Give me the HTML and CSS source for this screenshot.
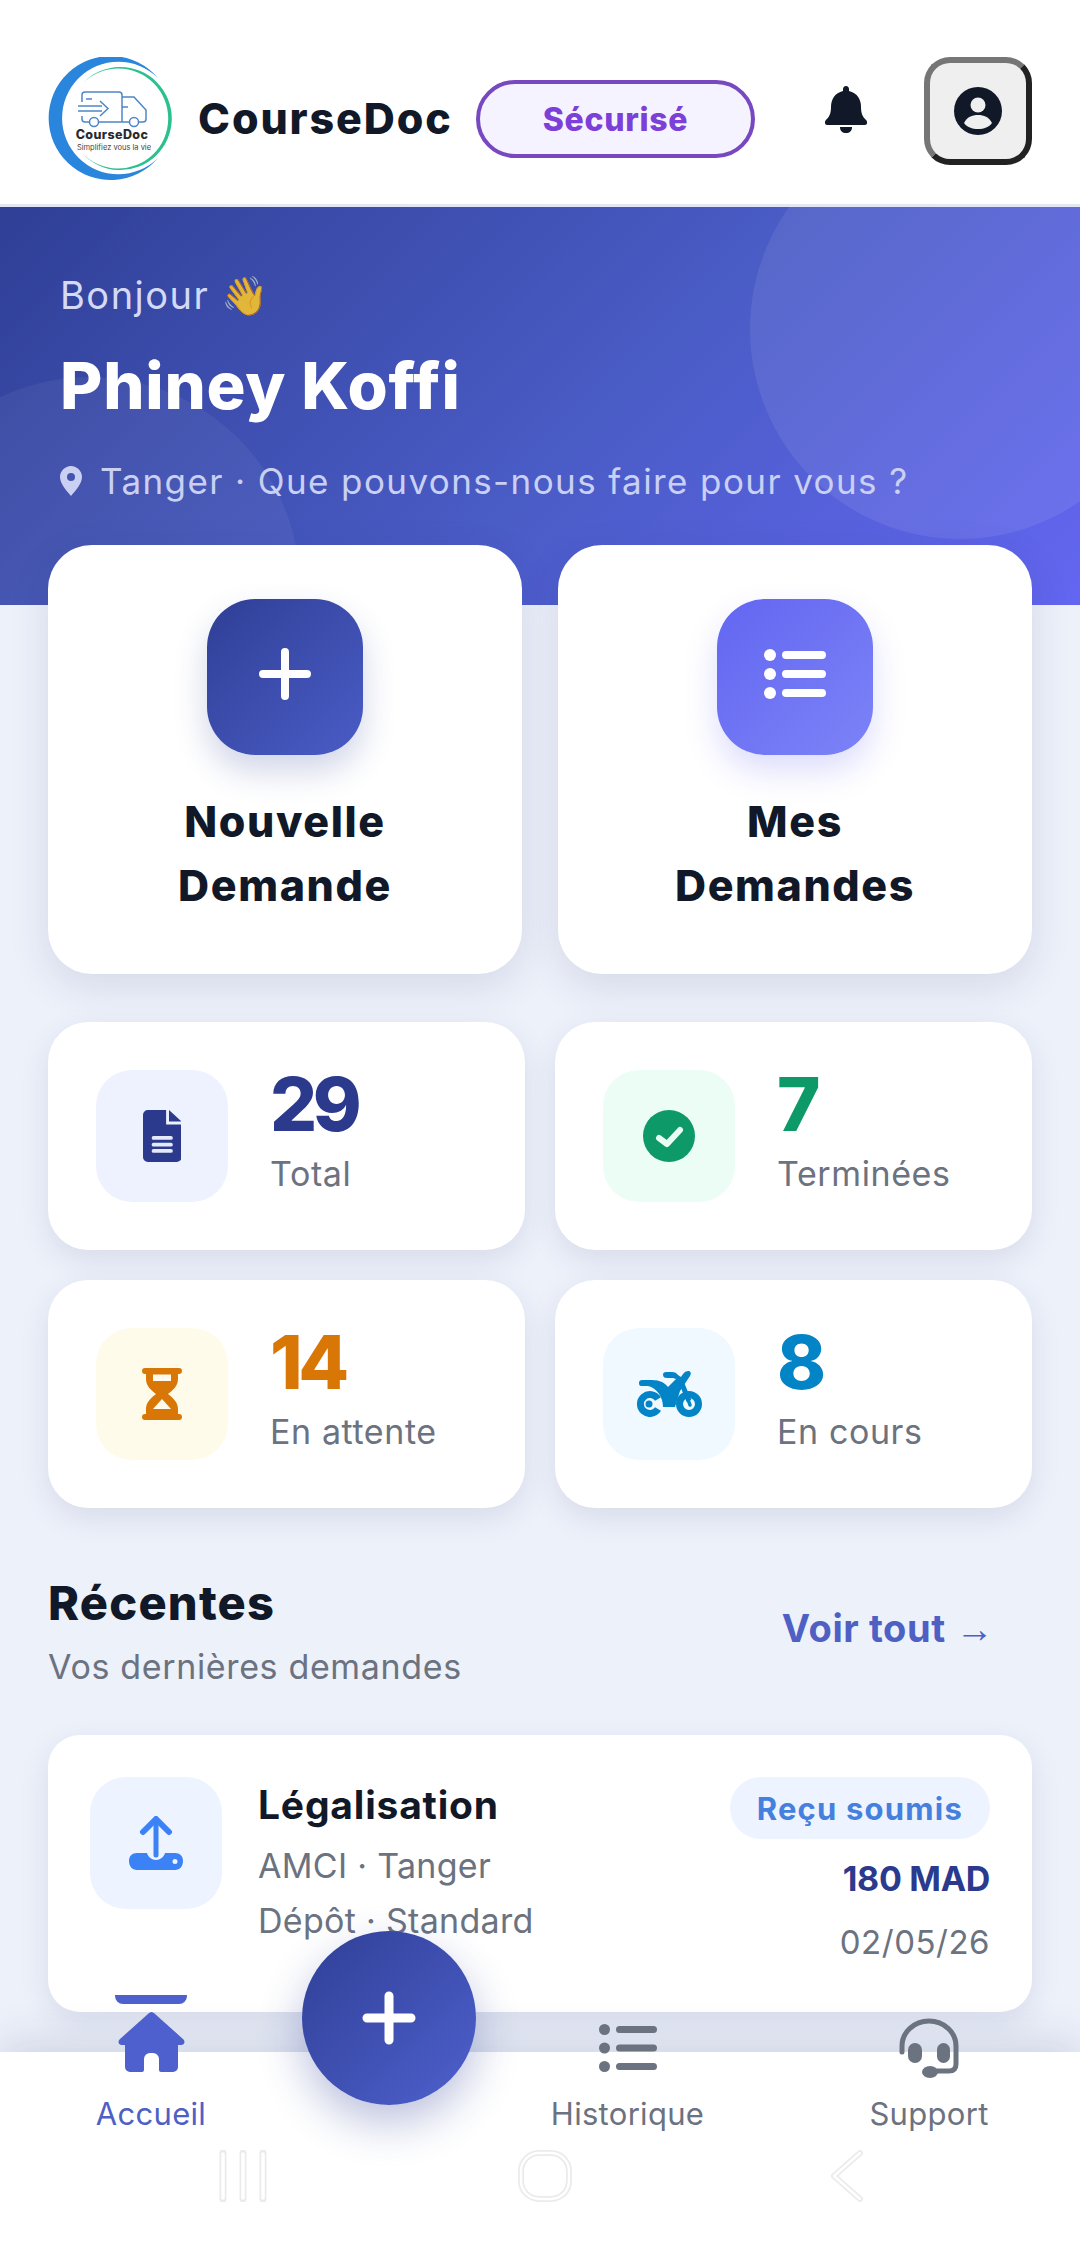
FILE: index.html
```
<!DOCTYPE html>
<html lang="fr">
<head>
  <meta charset="UTF-8">
  <title>CourseDoc</title>
  <link rel="stylesheet" href="styles.css">
</head>
<body>
  <div class="app">
    <header class="topbar">
      <svg class="logo" viewBox="0 0 124 125">
        <path d="M110 21A62 62 0 1 0 110 101A56.300 56.300 0 1 1 110 21Z" fill="#2a86dc"/>
        <path d="M35 26A51.500 51.500 0 1 1 34 96A50 50 0 1 0 35 26Z" fill="#2cbf8f"/>
        <g fill="none" stroke="#4d86c6" stroke-width="1.500">
          <path d="M34 45V38a3 3 0 0 1 3-3H71a3 3 0 0 1 3 3V65H51M34 59V62a3 3 0 0 0 3 3H41M74 40H86L98 53V62a3 3 0 0 1-3 3H91M74 65H81M74 50H80"/>
          <circle cx="46" cy="65" r="4.500"/>
          <circle cx="86" cy="65" r="4.500"/>
          <path d="M30 49H54M30 54H54M52 44L60 51.500L52 59M38 42H44"/>
        </g>
        <text class="logo-name" x="64" y="82" text-anchor="middle">CourseDoc</text>
        <text class="logo-tag" x="66" y="93" text-anchor="middle">Simplifiez vous la vie</text>
      </svg>
      <span class="brand">CourseDoc</span>
      <span class="secure">Sécurisé</span>
      <svg class="bell" viewBox="0 0 42 47">
        <path d="M21 0c2 0 3 1.500 3 3v2c8 2 12 8 12 16c0 7 2 10 5 13c2 2 1 5-1 5H2c-2 0-3-3-1-5c3-3 5-6 5-13c0-8 4-14 12-16V3c0-1.500 1-3 3-3Z" fill="#111827"/>
        <path d="M15 41h12c0 4-2.500 6-6 6s-6-2-6-6Z" fill="#111827"/>
      </svg>
      <button class="avatar">
        <svg viewBox="0 0 48 48">
          <circle cx="24" cy="24" r="24" fill="#111827"/>
          <circle cx="24" cy="18" r="7.500" fill="#efefef"/>
          <path d="M10 36c3-6 8-8 14-8s11 2 14 8c-3 4-8 6-14 6s-11-2-14-6Z" fill="#efefef"/>
        </svg>
      </button>
    </header>

    <section class="hero">
      <div class="hero-circle-right"></div>
      <div class="hero-circle-left"></div>
      <p class="hello">Bonjour <span class="wave">👋</span></p>
      <h1>Phiney Koffi</h1>
      <p class="place">
        <svg viewBox="0 0 22 30"><path fill-rule="evenodd" d="M11 0c6 0 11 5 11 11 0 7-7 14-11 19C7 25 0 18 0 11 0 5 5 0 11 0Zm0 7a4 4 0 1 0 0 8 4 4 0 0 0 0-8Z" fill="#c9d0f2"/></svg>
        Tanger · Que pouvons-nous faire pour vous ?
      </p>
    </section>

    <main class="content">
      <div class="actions">
        <div class="action">
          <div class="action-icon navy">
            <svg viewBox="0 0 52 52"><path d="M26 4v44M4 26h44" stroke="#fff" stroke-width="8" stroke-linecap="round"/></svg>
          </div>
          <span>Nouvelle<br>Demande</span>
        </div>
        <div class="action">
          <div class="action-icon violet">
            <svg viewBox="0 0 62 50">
              <circle cx="6" cy="6" r="6" fill="#fff"/><circle cx="6" cy="25" r="6" fill="#fff"/><circle cx="6" cy="44" r="6" fill="#fff"/>
              <path d="M22 6h36M22 25h36M22 44h36" stroke="#fff" stroke-width="8" stroke-linecap="round"/>
            </svg>
          </div>
          <span>Mes<br>Demandes</span>
        </div>
      </div>

      <div class="stats">
        <div class="stat">
          <div class="stat-icon bg-blue">
            <svg viewBox="0 0 40 54">
              <path d="M5 0h19v15h16v34a5 5 0 0 1-5 5H5a5 5 0 0 1-5-5V5a5 5 0 0 1 5-5Z" fill="#2b3a8c"/>
              <path d="M27 0l13 12H27Z" fill="#2b3a8c"/>
              <path d="M11 29h18M11 36h18M11 42.500h18" stroke="#e4e9fb" stroke-width="4" stroke-linecap="round"/>
            </svg>
          </div>
          <div><b class="navy-text">29</b><small>Total</small></div>
        </div>
        <div class="stat">
          <div class="stat-icon bg-green">
            <svg viewBox="0 0 52 52">
              <circle cx="26" cy="26" r="26" fill="#0e9968"/>
              <path d="M16 28l8 6 13-14" fill="none" stroke="#eafdf4" stroke-width="6" stroke-linecap="round" stroke-linejoin="round"/>
            </svg>
          </div>
          <div><b class="green-text">7</b><small>Terminées</small></div>
        </div>
        <div class="stat">
          <div class="stat-icon bg-yellow">
            <svg viewBox="0 0 40 52">
              <path d="M3 0h34a3 3 0 0 1 0 6h-1v5c0 7-5 11-10 15 5 4 10 8 10 15v5h1a3 3 0 0 1 0 6H3a3 3 0 0 1 0-6h1v-5c0-7 5-11 10-15C9 22 4 18 4 11V6H3a3 3 0 0 1 0-6Z" fill="#d97706"/>
              <path d="M11 6.500h18v6.500H11ZM20 31l9 10H11Z" fill="#fffaeb"/>
            </svg>
          </div>
          <div><b class="orange-text">14</b><small>En attente</small></div>
        </div>
        <div class="stat">
          <div class="stat-icon bg-sky">
            <svg class="moto" viewBox="0 0 66 46">
              <path d="M3 12Q3 9 6 9H16C24 9 29 12 32 16L40 8L37 7H31Q27 7 27 3.500Q27 1 30 1H36Q40 1 42 4L45 6L47 3Q49 0 52 0H53Q56 1 54 5L50 11L44 20L39 36H27C27 26 21 17 12 15H5Q3 15 3 12Z" fill="#0284c7"/>
              <path d="M46 13L53 30" stroke="#0284c7" stroke-width="5" fill="none"/>
              <path d="M22 38A9.500 9.500 0 1 1 22 28" fill="none" stroke="#0284c7" stroke-width="7"/>
              <circle cx="13" cy="33" r="3.500" fill="#0284c7"/>
              <circle cx="53" cy="33" r="9.500" fill="none" stroke="#0284c7" stroke-width="7"/>
              <path d="M51 26L54 34" stroke="#0284c7" stroke-width="3.500" stroke-linecap="round"/>
            </svg>
          </div>
          <div><b class="sky-text">8</b><small>En cours</small></div>
        </div>
      </div>

      <div class="section-head">
        <div>
          <h2>Récentes</h2>
          <p>Vos dernières demandes</p>
        </div>
        <a class="see-all">Voir tout <span class="arrow">→</span></a>
      </div>

      <div class="recent">
        <div class="recent-icon">
          <svg viewBox="0 0 54 54">
            <path d="M27 4v35" stroke="#3b82f6" stroke-width="5" stroke-linecap="round"/>
            <path d="M14 16L27 3l13 13" fill="none" stroke="#3b82f6" stroke-width="6" stroke-linecap="round" stroke-linejoin="round"/>
            <path fill-rule="evenodd" d="M8 37h10c1 4 5 7 9 7s8-3 9-7h10c5 0 8 3 8 8s-3 9-8 9H8c-5 0-8-4-8-9s3-8 8-8Zm38 6a2.500 2.500 0 1 0 0 5 2.500 2.500 0 0 0 0-5Z" fill="#3b82f6"/>
          </svg>
        </div>
        <div class="recent-main">
          <h3>Légalisation</h3>
          <p>AMCI · Tanger</p>
          <p>Dépôt · Standard</p>
        </div>
        <div class="recent-side">
          <span class="badge">Reçu soumis</span>
          <b>180 MAD</b>
          <small>02/05/26</small>
        </div>
      </div>
    </main>

    <nav class="tabbar">
      <div class="tab active">
        <i class="tab-mark"></i>
        <svg class="tab-home" viewBox="0 0 67 60">
          <path d="M33.500 0c1 0 2 .5 3 1.500L65 27c3 3 1 6-2 6h-3v22a5 5 0 0 1-5 5H43a2 2 0 0 1-2-2V47a6 6 0 0 0-6-6h-3a6 6 0 0 0-6 6v11a2 2 0 0 1-2 2H12a5 5 0 0 1-5-5V33H4c-3 0-5-3-2-6L30.500 1.500c1-1 2-1.500 3-1.500Z" fill="#4e60cd"/>
        </svg>
        <span>Accueil</span>
      </div>
      <div class="tab">
        <svg class="tab-list" viewBox="0 0 58 48">
          <circle cx="5.500" cy="5.500" r="5.500" fill="#6b7280"/><circle cx="5.500" cy="24" r="5.500" fill="#6b7280"/><circle cx="5.500" cy="42.500" r="5.500" fill="#6b7280"/>
          <path d="M20.500 5.500h34M20.500 24h34M20.500 42.500h34" stroke="#6b7280" stroke-width="7" stroke-linecap="round"/>
        </svg>
        <span>Historique</span>
      </div>
      <div class="tab">
        <svg class="tab-support" viewBox="0 0 60 60">
          <path d="M3 34V28A27 25 0 0 1 57 28V46Q57 53 50 53H34" fill="none" stroke="#6b7280" stroke-width="5" stroke-linecap="round"/>
          <rect x="9" y="25" width="14" height="20" rx="7" fill="#6b7280"/>
          <rect x="38" y="25" width="13" height="20" rx="6.500" fill="#6b7280"/>
          <ellipse cx="31" cy="54" rx="8" ry="6" fill="#6b7280"/>
        </svg>
        <span>Support</span>
      </div>
      <button class="fab">
        <svg viewBox="0 0 54 54"><path d="M27 5v44M5 27h44" stroke="#fff" stroke-width="9" stroke-linecap="round"/></svg>
      </button>
    </nav>

    <div class="sysbar">
      <svg class="sys-recent" viewBox="0 0 48 52">
        <path d="M4 3v46M24 3v46M44 3v46" stroke="#ebebee" stroke-width="7" stroke-linecap="round"/>
        <path d="M4 4v44M24 4v44M44 4v44" stroke="#fff" stroke-width="3.500" stroke-linecap="round"/>
      </svg>
      <svg class="sys-home" viewBox="0 0 54 52">
        <rect x="3" y="3" width="48" height="46" rx="18" fill="none" stroke="#ebebee" stroke-width="6"/>
        <rect x="3" y="3" width="48" height="46" rx="18" fill="none" stroke="#fff" stroke-width="2.500"/>
      </svg>
      <svg class="sys-back" viewBox="0 0 34 52">
        <path d="M30 3L4 26l26 23" fill="none" stroke="#ebebee" stroke-width="6" stroke-linecap="round" stroke-linejoin="round"/>
        <path d="M30 3L4 26l26 23" fill="none" stroke="#fff" stroke-width="2.500" stroke-linecap="round" stroke-linejoin="round"/>
      </svg>
    </div>
  </div>
</body>
</html>
```

FILE: styles.css
```
* {
  box-sizing: border-box;
}
html, body {
  margin: 0;
  padding: 0;
}
body {
  font-family: Inter, "Noto Sans", sans-serif;
  background: #fff;
  color: #111827;
}
p, h1, h2, h3 {
  margin: 0;
}
svg {
  display: block;
}
button {
  font: inherit;
  padding: 0;
}
.app {
  position: relative;
  width: 1080px;
  height: 2247px;
  overflow: hidden;
  background: #edf1fa;
}

/* top bar */
.topbar {
  height: 207px;
  background: #fff;
  border-bottom: 3px solid #e3e7f3;
  padding: 57px 48px 0 48px;
  display: flex;
  align-items: flex-start;
}
.logo {
  width: 124px;
  height: 125px;
  flex: none;
}
.logo-name {
  font-size: 12.5px;
  font-weight: 800;
  letter-spacing: 0.4px;
  fill: #2a2a2e;
}
.logo-tag {
  font-size: 7.5px;
  fill: #444;
}
.brand {
  margin: 37px 0 0 26px;
  font-size: 43px;
  line-height: 48px;
  font-weight: 800;
  letter-spacing: 1.9px;
  width: 278px;
  flex: none;
}
.secure {
  margin: 23px 0 0 0;
  width: 279px;
  height: 78px;
  flex: none;
  border: 4px solid #7748bf;
  border-radius: 39px;
  background: #f5f3ff;
  color: #7c3fd8;
  font-size: 32px;
  font-weight: 800;
  letter-spacing: 0.7px;
  display: flex;
  align-items: center;
  justify-content: center;
}
.bell {
  margin: 29px 0 0 70px;
  width: 42px;
  height: 47px;
  flex: none;
}
.avatar {
  margin: 0 0 0 57px;
  width: 108px;
  height: 108px;
  flex: none;
  background: #efefef;
  border: 6px solid;
  border-color: #767676 #222 #222 #767676;
  border-radius: 26px;
  display: flex;
  align-items: center;
  justify-content: center;
}
.avatar svg {
  width: 48px;
  height: 48px;
}

/* hero */
.hero {
  position: relative;
  height: 398px;
  padding: 63px 60px 0 60px;
  overflow: hidden;
  color: #fff;
  background: linear-gradient(135deg, #2f3f96 0%, #4a5cc6 55%, #6366f1 100%);
}
.hero-circle-right {
  position: absolute;
  left: 750px;
  top: -88px;
  width: 420px;
  height: 420px;
  border-radius: 50%;
  background: rgba(255, 255, 255, 0.08);
}
.hero-circle-left {
  position: absolute;
  left: -120px;
  top: 170px;
  width: 420px;
  height: 420px;
  border-radius: 50%;
  background: rgba(255, 255, 255, 0.05);
}
.hello, .hero h1, .place {
  position: relative;
}
.hello {
  font-size: 38px;
  line-height: 50px;
  letter-spacing: 1.5px;
  color: #d4daf6;
}
.wave {
  font-family: "Noto Color Emoji", sans-serif;
  font-size: 38px;
  opacity: 0.85;
}
.hero h1 {
  margin-top: 25px;
  font-size: 65px;
  line-height: 80px;
  font-weight: 800;
  letter-spacing: 0.8px;
}
.place {
  margin-top: 31px;
  display: flex;
  align-items: center;
  gap: 18px;
  font-size: 35px;
  line-height: 48px;
  letter-spacing: 1.4px;
  color: #c9d0f2;
}
.place svg {
  width: 22px;
  height: 30px;
}

/* page content */
.content {
  position: relative;
  margin-top: -60px;
  padding: 0 48px;
}
.actions {
  display: grid;
  grid-template-columns: 474px 474px;
  gap: 36px;
}
.action {
  height: 429px;
  background: #fff;
  border-radius: 44px;
  box-shadow: 0 12px 40px rgba(30, 40, 100, 0.12);
  padding-top: 54px;
  display: flex;
  flex-direction: column;
  align-items: center;
}
.action span {
  margin-top: 34px;
  font-size: 43px;
  line-height: 64px;
  font-weight: 800;
  letter-spacing: 1.6px;
  text-align: center;
}
.action-icon {
  width: 156px;
  height: 156px;
  padding-bottom: 6px;
  border-radius: 48px;
  display: flex;
  align-items: center;
  justify-content: center;
}
.action-icon.navy {
  background: linear-gradient(135deg, #2f3f96, #4a5cc6);
  box-shadow: 0 16px 32px rgba(47, 63, 150, 0.22);
}
.action-icon.navy svg {
  width: 52px;
  height: 52px;
}
.action-icon.violet {
  background: linear-gradient(135deg, #6366f1, #7c83f7);
  box-shadow: 0 16px 32px rgba(99, 102, 241, 0.22);
}
.action-icon.violet svg {
  width: 62px;
  height: 50px;
}

.stats {
  margin-top: 48px;
  display: grid;
  grid-template-columns: 477px 477px;
  column-gap: 30px;
  row-gap: 30px;
}
.stat {
  height: 228px;
  background: #fff;
  border-radius: 40px;
  box-shadow: 0 10px 30px rgba(30, 40, 100, 0.1);
  padding: 48px 48px 0 48px;
  display: flex;
  gap: 42px;
}
.stat b {
  display: block;
  font-size: 74px;
  line-height: 72px;
  font-weight: 800;
  letter-spacing: -4.5px;
  margin-top: -2px;
}
.stat small {
  display: block;
  margin-top: 11px;
  font-size: 34px;
  line-height: 46px;
  letter-spacing: 0.6px;
  color: #6b7280;
}
.stat-icon {
  width: 132px;
  height: 132px;
  flex: none;
  border-radius: 36px;
  display: flex;
  align-items: center;
  justify-content: center;
}
.stat-icon svg {
  height: 52px;
}
.stat-icon .moto {
  height: 46px;
  width: 66px;
}
.bg-blue { background: #eef2ff; }
.bg-green { background: #ecfdf5; }
.bg-yellow { background: #fffbeb; }
.bg-sky { background: #f0f9ff; }
.navy-text { color: #2b3a8c; }
.green-text { color: #0e9968; }
.orange-text { color: #d97706; }
.sky-text { color: #0284c7; }

.section-head {
  margin-top: 66px;
  display: flex;
  justify-content: space-between;
  align-items: center;
}
.section-head h2 {
  font-size: 47px;
  line-height: 58px;
  font-weight: 800;
  letter-spacing: 1.2px;
}
.section-head p {
  margin-top: 13px;
  font-size: 34px;
  line-height: 44px;
  letter-spacing: 0.65px;
  color: #6b7280;
}
.see-all {
  margin: 0 38px 8px 0;
  font-size: 38px;
  font-weight: 700;
  letter-spacing: 0.6px;
  color: #4e60c4;
}
.arrow {
  font-family: "Liberation Sans", sans-serif;
  font-size: 38px;
  font-weight: 400;
}

.recent {
  margin-top: 46px;
  height: 277px;
  background: #fff;
  border-radius: 32px;
  box-shadow: 0 10px 30px rgba(30, 40, 100, 0.1);
  padding: 42px 42px 0 42px;
  display: flex;
}
.recent-icon {
  width: 132px;
  height: 132px;
  flex: none;
  border-radius: 36px;
  background: #edf3ff;
  display: flex;
  align-items: center;
  justify-content: center;
}
.recent-icon svg {
  width: 54px;
  height: 54px;
}
.recent-main {
  margin-left: 36px;
  flex: 1;
}
.recent-main h3 {
  margin-top: 1px;
  font-size: 39px;
  line-height: 54px;
  font-weight: 700;
  letter-spacing: 0.8px;
}
.recent-main p {
  font-size: 34px;
  line-height: 55px;
  letter-spacing: 0.3px;
  color: #6b7280;
}
.recent-main h3 + p {
  margin-top: 6px;
}
.recent-side {
  display: flex;
  flex-direction: column;
  align-items: flex-end;
}
.badge {
  height: 62px;
  padding: 0 27px;
  border-radius: 31px;
  background: #edf3ff;
  color: #4580de;
  font-size: 31px;
  font-weight: 700;
  letter-spacing: 1.2px;
  display: flex;
  align-items: center;
}
.recent-side b {
  margin-top: 16px;
  font-size: 34px;
  line-height: 48px;
  font-weight: 700;
  letter-spacing: -0.3px;
  color: #2b3a8c;
}
.recent-side small {
  margin-top: 15px;
  font-size: 33px;
  line-height: 48px;
  letter-spacing: 0.5px;
  color: #6b7280;
}

/* bottom nav */
.tabbar {
  position: absolute;
  left: 0;
  top: 2052px;
  width: 1080px;
  height: 195px;
  background: #fff;
  box-shadow: 0 -10px 40px rgba(30, 40, 100, 0.14);
}
.tab {
  position: absolute;
  top: -40px;
  display: flex;
  flex-direction: column;
  align-items: center;
  font-size: 31px;
  letter-spacing: 0.3px;
  color: #6b7280;
}
.tab span {
  line-height: 44px;
}
.tab:nth-child(1) { left: 96px; width: 110px; }
.tab:nth-child(2) { left: 550px; width: 155px; }
.tab:nth-child(3) { left: 868px; width: 122px; }
.tab.active {
  color: #4e60c4;
}
.tab-mark {
  position: absolute;
  left: 19px;
  top: -17px;
  width: 72px;
  height: 9px;
  border-radius: 0 0 8px 8px;
  background: #4e60cd;
}
.tab-home {
  width: 67px;
  height: 60px;
  margin-bottom: 20px;
}
.tab-list {
  width: 58px;
  height: 48px;
  margin-top: 12px;
  margin-bottom: 20px;
}
.tab-support {
  width: 60px;
  height: 60px;
  margin-top: 6px;
  margin-bottom: 14px;
}
.fab {
  position: absolute;
  left: 302px;
  top: -121px;
  width: 174px;
  height: 174px;
  border: none;
  border-radius: 50%;
  background: linear-gradient(135deg, #2f3f96, #4e60cd);
  box-shadow: 0 18px 44px rgba(47, 63, 150, 0.32);
  display: flex;
  align-items: center;
  justify-content: center;
}
.fab svg {
  width: 54px;
  height: 54px;
}

.sysbar {
  position: absolute;
  left: 0;
  top: 2150px;
  width: 1080px;
  height: 52px;
}
.sys-recent, .sys-home, .sys-back {
  position: absolute;
  top: 0;
  height: 52px;
}
.sys-recent { left: 219px; width: 48px; }
.sys-home { left: 518px; width: 54px; }
.sys-back { left: 830px; width: 34px; }
```
